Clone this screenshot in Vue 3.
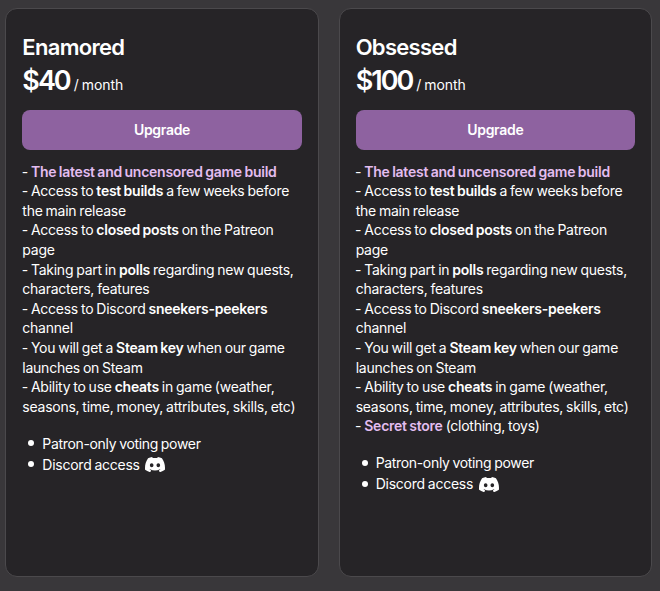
<template>
  <main class="tiers">
    <section v-for="tier in tiers" :key="tier.name" class="card">
      <h2 class="name">{{ tier.name }}</h2>
      <div class="price">
        <span class="amount">{{ tier.price }}</span>
        <span class="period">/ month</span>
      </div>
      <button class="upgrade" type="button">Upgrade</button>
      <div class="description">
        <p v-for="(perk, i) in tier.perks" :key="i">
          - {{ perk.before }}<strong :class="{ accent: perk.accent }">{{ perk.bold }}</strong>{{ perk.after }}
        </p>
      </div>
      <ul class="benefits">
        <li><span class="voting">Patron-only voting power</span></li>
        <li>
          <span>Discord access</span>
          <svg class="discord" viewBox="0 0 127.14 96.36" aria-hidden="true">
            <path
              fill="currentColor"
              d="M107.7 8.07A105.15 105.15 0 0 0 81.47 0a72.06 72.06 0 0 0-3.36 6.83 97.68 97.68 0 0 0-29.11 0A72.37 72.37 0 0 0 45.64 0a105.89 105.89 0 0 0-26.25 8.09C2.79 32.65-1.71 56.6.54 80.21a105.73 105.73 0 0 0 32.17 16.15 77.7 77.7 0 0 0 6.89-11.11 68.42 68.42 0 0 1-10.85-5.18c.91-.66 1.8-1.34 2.66-2a75.57 75.57 0 0 0 64.32 0c.87.71 1.76 1.39 2.66 2a68.68 68.68 0 0 1-10.87 5.19 77 77 0 0 0 6.89 11.1 105.25 105.25 0 0 0 32.19-16.14c2.64-27.38-4.51-51.11-18.9-72.15ZM42.45 65.69C36.18 65.69 31 60 31 53s5-12.74 11.43-12.74S54 46 53.89 53s-5.05 12.69-11.44 12.69Zm42.24 0C78.41 65.69 73.25 60 73.25 53s5-12.74 11.44-12.74S96.23 46 96.12 53s-5.04 12.69-11.43 12.69Z"
            />
          </svg>
        </li>
      </ul>
    </section>
  </main>
</template>

<script setup>
  const perks = [
    { before: '', bold: 'The latest and uncensored game build', after: '', accent: true },
    { before: 'Access to ', bold: 'test builds', after: ' a few weeks before the main release' },
    { before: 'Access to ', bold: 'closed posts', after: ' on the Patreon page' },
    { before: 'Taking part in ', bold: 'polls', after: ' regarding new quests, characters, features' },
    { before: 'Access to Discord ', bold: 'sneekers-peekers', after: ' channel' },
    { before: 'You will get a ', bold: 'Steam key', after: ' when our game launches on Steam' },
    { before: 'Ability to use ', bold: 'cheats', after: ' in game (weather, seasons, time, money, attributes, skills, etc)' },
  ];

  const tiers = [
    { name: 'Enamored', price: '$40', perks },
    {
      name: 'Obsessed',
      price: '$100',
      perks: [...perks, { before: '', bold: 'Secret store', after: ' (clothing, toys)', accent: true }],
    },
  ];
</script>

<style>
  body {
    margin: 0;
    background: #39373a;
  }
</style>

<style scoped>
  .tiers {
    display: grid;
    grid-template-columns: 313.33px 313.33px;
    gap: 20px;
    height: 591px;
    padding: 8px 8px 14px 5.33px;
    box-sizing: border-box;
    font-family: Inter, 'Liberation Sans', sans-serif;
    font-size: 14px;
    letter-spacing: -0.25px;
    word-spacing: -0.7px;
    line-height: 19.6px;
    color: #fff;
  }

  .card {
    box-sizing: border-box;
    padding: 24px 16px;
    border: 1px solid #4b494c;
    border-radius: 12px;
    background: #262427;
  }

  .name {
    margin: 0;
    font-size: 22px;
    font-weight: 600;
    line-height: 28px;
    letter-spacing: -0.7px;
  }

  .price {
    display: flex;
    align-items: baseline;
    gap: 4px;
    height: 36px;
    margin-top: 2px;
    line-height: 36.4px;
  }

  .amount {
    font-size: 27px;
    font-weight: 600;
    letter-spacing: -2px;
  }

  .period {
    letter-spacing: -0.1px;
  }

  .upgrade {
    display: block;
    width: 100%;
    height: 40px;
    margin: 11px 0 11.6px;
    padding: 0;
    border: 0;
    border-radius: 8px;
    background: #8e62a0;
    color: #fff;
    font: inherit;
    font-weight: 600;
    letter-spacing: -0.3px;
  }

  .description p {
    margin: 0;
    text-indent: -0.6px;
  }

  .description strong {
    font-weight: 600;
  }

  .description .accent {
    color: #e3bdf0;
  }

  .benefits {
    margin: 16.4px 0 0;
    padding: 0;
    line-height: 21px;
    list-style: none;
  }

  .benefits li {
    display: flex;
    align-items: center;
    height: 21px;
  }

  .benefits li::before {
    content: '';
    width: 6px;
    height: 6px;
    margin: 0 8px 0 6px;
    border-radius: 50%;
    background: currentColor;
  }

  .voting {
    letter-spacing: -0.33px;
  }

  .discord {
    width: 20px;
    height: 15.2px;
    margin: 1px 0 0 5.5px;
  }
</style>
